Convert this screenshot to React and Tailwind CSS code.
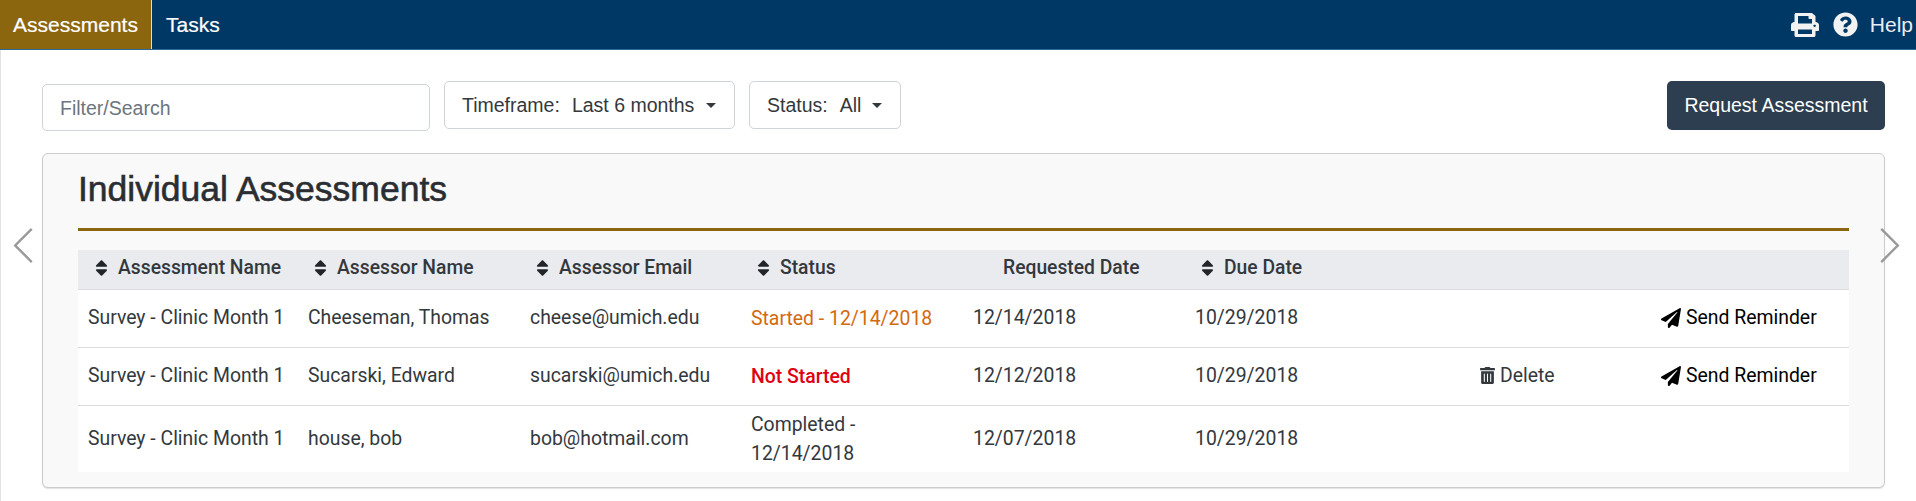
import React from "react";
import { FaPrint, FaQuestionCircle, FaPaperPlane, FaTrashAlt, FaSort } from "react-icons/fa";

const rows = [
  { n: "Survey - Clinic Month 1", a: "Cheeseman, Thomas", e: "cheese@umich.edu", s: "Started - 12/14/2018", c: "text-[#d2690f]", r: "12/14/2018", d: "10/29/2018", del: false, send: true },
  { n: "Survey - Clinic Month 1", a: "Sucarski, Edward", e: "sucarski@umich.edu", s: "Not Started", c: "text-[#e00012]", r: "12/12/2018", d: "10/29/2018", del: true, send: true },
  { n: "Survey - Clinic Month 1", a: "house, bob", e: "bob@hotmail.com", s: "Completed - 12/14/2018", c: "text-[#33383d]", r: "12/07/2018", d: "10/29/2018", del: false, send: false },
];

function Sort({ label }) {
  return (
    <span className="flex items-center gap-[10px] pb-[2px]">
      <FaSort className="w-[13px] h-[20px] text-[#212529]" />
      <span>{label}</span>
    </span>
  );
}

function Chevron({ className }) {
  return (
    <svg viewBox="0 0 20 36" className={className} fill="none" stroke="#9a9a9a" strokeWidth="2.5">
      <path d="M19 1 L2 18 L19 35" />
    </svg>
  );
}

export default function App() {
  return (
    <div className="relative w-full h-[501px] bg-white overflow-hidden font-['Liberation_Sans',Arial,sans-serif] text-[#212529]">
      <nav className="h-[50px] bg-[#003865] border-b border-[#2a6a96] flex items-stretch text-white text-[21px]">
        <div className="w-[152px] bg-[#8c650f] border-r border-[#e6dcc4] flex items-center justify-center [-webkit-text-stroke:0.2px_#ffffff]">Assessments</div>
        <div className="pl-[14px] flex items-center [-webkit-text-stroke:0.2px_#ffffff]">Tasks</div>
        <div className="ml-auto flex items-center pr-[3px]">
          <FaPrint preserveAspectRatio="none" className="w-[28px] h-[24px] text-[#f2f2f2]" />
          <FaQuestionCircle className="ml-[14px] w-[25px] h-[25px] text-[#f2f2f2]" />
          <span className="ml-[12px] text-[#e8edf2]">Help</span>
        </div>
      </nav>

      <main className="h-[451px] pl-[41px] pr-[31px] border-l border-[#e2e2e2]">
        <div className="pt-[31px] flex items-start">
          <input
            readOnly
            placeholder="Filter/Search"
            className="mt-[3px] w-[388px] h-[47px] pl-[17px] pr-[18px] pt-[1px] bg-white border border-[#ced4da] rounded-[5px] text-[19.5px] placeholder:text-[#6c757d] outline-none"
          />
          <button className="ml-[14px] w-[291px] h-[48px] pt-[1px] bg-white border border-[#ced4da] rounded-[5px] flex items-center pl-[17px] text-[19.5px] text-[#33383d]">
            <span>Timeframe:</span>
            <span className="ml-[12px]">Last 6 months</span>
            <span className="ml-[12px] w-0 h-0 border-x-[5px] border-x-transparent border-t-[5px] border-t-[#33383d]" />
          </button>
          <button className="ml-[14px] w-[152px] h-[48px] pt-[1px] bg-white border border-[#ced4da] rounded-[5px] flex items-center pl-[17px] text-[19.5px] text-[#33383d]">
            <span>Status:</span>
            <span className="ml-[12px]">All</span>
            <span className="ml-[11px] w-0 h-0 border-x-[5px] border-x-transparent border-t-[5px] border-t-[#33383d]" />
          </button>
          <button className="ml-auto w-[218px] h-[49px] bg-[#2c3e50] rounded-[5px] text-white text-[19.5px]">Request Assessment</button>
        </div>

        <section className="mt-[22px] h-[335px] bg-[#f9f9f9] border border-[#cccccc] rounded-[6px] shadow-[0_1px_1px_rgba(0,0,0,0.12)] px-[35px]">
          <h1 className="h-[72px] pb-[2px] flex items-center text-[35.5px] text-[#2a2e33] [-webkit-text-stroke:0.6px_#2a2e33] border-b-[3px] border-[#8c650f] box-content">Individual Assessments</h1>
          <table className="mt-[19px] w-[1771px] table-fixed border-collapse font-['Roboto',sans-serif] text-[19.4px] text-[#33383d]">
            <colgroup>
              <col className="w-[220px]" />
              <col className="w-[222px]" />
              <col className="w-[221px]" />
              <col className="w-[222px]" />
              <col className="w-[222px]" />
              <col className="w-[285px]" />
              <col className="w-[181px]" />
              <col className="w-[198px]" />
            </colgroup>
            <thead>
              <tr className="h-[39px] bg-[#e9ebef] text-left text-[19.3px] border-b border-[#dddddd]">
                <th className="pl-[17px] font-medium"><Sort label="Assessment Name" /></th>
                <th className="pl-[16px] font-medium"><Sort label="Assessor Name" /></th>
                <th className="pl-[16px] font-medium"><Sort label="Assessor Email" /></th>
                <th className="pl-[16px] font-medium"><Sort label="Status" /></th>
                <th className="pl-[40px] pb-[2px] font-medium">Requested Date</th>
                <th className="pl-[16px] font-medium"><Sort label="Due Date" /></th>
                <th />
                <th />
              </tr>
            </thead>
            <tbody>
              {rows.map((r, i) => (
                <tr key={i} className={`bg-white ${i < 2 ? "h-[58px] border-b border-[#dddddd]" : "h-[67px]"}`}>
                  <td className="pl-[10px]">{r.n}</td>
                  <td className="pl-[10px]">{r.a}</td>
                  <td className="pl-[10px]">{r.e}</td>
                  <td className={`pl-[10px] pr-[10px] leading-[29px] ${r.c} ${i === 1 ? "font-medium" : ""}`}>{r.s}</td>
                  <td className="pl-[10px]">{r.r}</td>
                  <td className="pl-[10px]">{r.d}</td>
                  <td className="pl-[10px]">
                    {r.del && (
                      <span className="flex items-center gap-[5px]">
                        <FaTrashAlt className="w-[15px] h-[17px] text-[#33383d]" />
                        Delete
                      </span>
                    )}
                  </td>
                  <td className="pl-[10px] text-black">
                    {r.send && (
                      <span className="flex items-center gap-[5px]">
                        <FaPaperPlane className="w-[20px] h-[20px]" />
                        Send Reminder
                      </span>
                    )}
                  </td>
                </tr>
              ))}
            </tbody>
          </table>
        </section>
      </main>

      <Chevron className="absolute left-[13px] top-[228px] w-[20px] h-[35px]" />
      <Chevron className="absolute left-[1880px] top-[228px] w-[20px] h-[35px] -scale-x-100" />
    </div>
  );
}
